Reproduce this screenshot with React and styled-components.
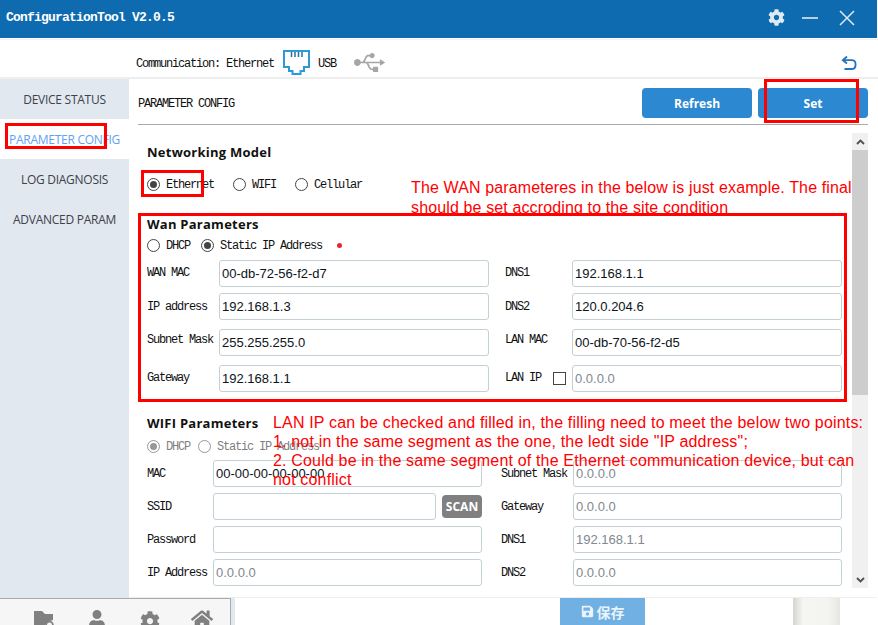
import React from 'react';
import styled, { createGlobalStyle } from 'styled-components';
import { FaCog, FaUsb, FaUser, FaHome, FaSave } from 'react-icons/fa';

const GlobalStyle = createGlobalStyle`
  html, body {
    margin: 0;
    padding: 0;
    background: #fff;
  }
`;

const MONO = '"Liberation Mono", "DejaVu Sans Mono", monospace';
const SANS = '"Liberation Sans", Arial, sans-serif';
const UI = '"Open Sans", "Noto Sans", sans-serif';

const Page = styled.div`
  position: relative;
  width: 878px;
  height: 625px;
  overflow: hidden;
  background: #fff;
  display: flex;
  flex-direction: column;
`;

const TitleBar = styled.div`
  height: 38px;
  margin-right: 1px;
  flex: none;
  background: #0f6bb0;
  display: flex;
  align-items: center;
  padding: 0 22px 0 6px;
  color: #fff;
`;

const AppTitle = styled.div`
  flex: 1;
  font: bold 13px ${MONO};
  letter-spacing: -0.8px;
  margin-top: -3px;
`;

const WindowButton = styled.div`
  display: flex;
  align-items: center;
  justify-content: center;
  margin-left: ${p => p.$gap}px;
  color: #dfeaf3;
  margin-top: -3px;
`;

const Toolbar = styled.div`
  height: 40px;
  flex: none;
  margin-top: 1px;
  box-sizing: border-box;
  border-top: 1px solid #f0f2f4;
  border-bottom: 2px solid #eeeeee;
  display: flex;
  align-items: center;
  padding: 8px 21px 0 136px;
`;

const MonoText = styled.span`
  font: 12px ${MONO};
  letter-spacing: -1.2px;
  padding-top: 2px;
  color: #111;
  white-space: nowrap;
`;

const ToolbarIcon = styled.div`
  display: flex;
  margin: 0 ${p => p.$right ?? 8}px 0 ${p => p.$left ?? 8}px;
`;

const Spacer = styled.div`
  flex: 1;
`;

const Body = styled.div`
  height: 519px;
  flex: none;
  display: flex;
`;

const Sidebar = styled.nav`
  width: 129px;
  flex: none;
  background: #e1e8f0;
  display: flex;
  flex-direction: column;
`;

const SideItem = styled.div`
  height: 40px;
  display: flex;
  align-items: center;
  justify-content: center;
  font: 12px ${UI};
  letter-spacing: -0.27px;
  white-space: nowrap;
  color: ${p => (p.$active ? '#5fa3f2' : '#3d4148')};
  background: ${p => (p.$active ? '#fff' : 'transparent')};
`;

const Main = styled.main`
  flex: 1;
  min-width: 0;
  margin-right: 1px;
  display: flex;
  flex-direction: column;
  border-bottom: 1px solid #eeeeee;
`;

const MainHeader = styled.div`
  height: 46px;
  margin: 0 9px;
  flex: none;
  box-sizing: border-box;
  border-bottom: 1px solid #aaaaaa;
  display: flex;
  align-items: center;
  gap: 6px;
  padding-top: 3px;
`;

const PrimaryButton = styled.button`
  width: 110px;
  height: 30px;
  border: none;
  border-radius: 4px;
  background: #2b88d1;
  color: #fff;
  font: bold 12px ${UI};
  padding: 0;
`;

const Content = styled.div`
  flex: 1;
  min-height: 0;
  display: flex;
  padding: 8px 9px 0 18px;
`;

const Form = styled.div`
  flex: 1;
  min-width: 0;
  overflow: hidden;
`;

const SectionTitle = styled.h3`
  margin: ${p => p.$top}px 0 0;
  height: 18px;
  font: bold 13px/18px ${UI};
  letter-spacing: 0.25px;
  color: #111;
`;

const RadioRow = styled.div`
  display: flex;
  align-items: center;
  height: 16px;
  margin-top: ${p => p.$top}px;
`;

const RadioItem = styled.label`
  display: flex;
  align-items: center;
  margin-right: ${p => p.$gap}px;
  gap: 6px;
  opacity: ${p => (p.$off ? 0.55 : 1)};
`;

const RadioCircle = styled.span`
  box-sizing: border-box;
  width: 13px;
  height: 13px;
  border-radius: 50%;
  border: 1px solid #444;
  background: #fff;
  display: flex;
  align-items: center;
  justify-content: center;
  &::after {
    content: '';
    display: ${p => (p.$on ? 'block' : 'none')};
    width: 7px;
    height: 7px;
    border-radius: 50%;
    background: #444;
  }
`;

const RedDot = styled.span`
  width: 5px;
  height: 5px;
  border-radius: 50%;
  background: #e8262d;
  margin-left: -1px;
`;

const FieldGrid = styled.div`
  display: grid;
  grid-template-columns: ${p => p.$columns};
  align-items: center;
  margin-top: ${p => p.$top}px;
`;

const FieldRow = styled.div`
  display: contents;
`;

// the labels do not sit on the input's centre line: raise says how far the
// cell is shortened from below
const Label = styled.div`
  font: 12px ${MONO};
  letter-spacing: -1.2px;
  color: #111;
  white-space: nowrap;
  display: flex;
  align-items: center;
  justify-content: space-between;
  padding-right: 6px;
  margin-bottom: ${p => p.$raise}px;
`;

const RightLabel = styled(Label)`
  padding-left: ${p => p.$indent}px;
`;

const Input = styled.div`
  box-sizing: border-box;
  height: 27px;
  margin-bottom: ${p => p.$below}px;
  border: 1px solid #c3d0d6;
  border-radius: 3px;
  background: #fff;
  display: flex;
  align-items: center;
  padding-left: 2px;
  font: 13px ${SANS};
  color: ${p => (p.$muted ? '#808890' : '#0c1420')};
  white-space: nowrap;
  overflow: hidden;
`;

const SsidCell = styled.div`
  display: flex;
  gap: 6px;
  margin-bottom: 6px;
`;

const SsidInput = styled(Input)`
  flex: 1;
  margin-bottom: 0;
`;

const ScanButton = styled.div`
  width: 40px;
  height: 23px;
  margin-top: 2px;
  border-radius: 4px;
  background: #808080;
  color: #fff;
  font: bold 12px/23px ${UI};
  text-align: center;
`;

const Checkbox = styled.span`
  box-sizing: border-box;
  width: 13px;
  height: 13px;
  border: 1px solid #444;
  background: #fff;
`;

const Scrollbar = styled.div`
  width: 16px;
  height: 455px;
  flex: none;
  background: #f0f0f0;
  display: flex;
  flex-direction: column;
  align-items: center;
`;

const ScrollArrow = styled.div`
  height: 17px;
  flex: none;
  display: flex;
  align-items: center;
  justify-content: center;
`;

const ScrollThumb = styled.div`
  width: 100%;
  height: 245px;
  flex: none;
  background: #cdcdcd;
`;

const Footer = styled.div`
  height: 27px;
  flex: none;
  display: flex;
  overflow: hidden;
`;

const Dock = styled.div`
  width: 231px;
  flex: none;
  box-sizing: border-box;
  background: #f6f6f6;
  border-top: 1px solid #aaaaaa;
  border-right: 1px solid #aaaaaa;
  display: flex;
  padding-left: 34px;
  color: #808080;
`;

const DockIcon = styled.div`
  display: flex;
  margin: ${p => p.$top}px 0 0 ${p => p.$left}px;
`;

const DockEdge = styled.div`
  width: 4px;
  flex: none;
  background: #e1e8f0;
`;

const SaveButton = styled.div`
  width: 85px;
  height: 27px;
  margin-left: 325px;
  flex: none;
  background: #70b0e2;
  color: #e9f3fb;
  display: flex;
  align-items: center;
  justify-content: center;
  gap: 3px;
  font: bold 14px "Noto Sans CJK SC", sans-serif;
`;

const BackdropEdge = styled.div`
  width: 47px;
  margin-left: 148px;
  flex: none;
  background: linear-gradient(90deg, #d4d4d0 0, #f6f6f3 22%, #f4f4f1 75%, #e6e6e3 100%);
`;

// red markup drawn over the screenshot
const MarkBox = styled.div`
  position: absolute;
  left: ${p => p.$x}px;
  top: ${p => p.$y}px;
  width: ${p => p.$w}px;
  height: ${p => p.$h}px;
  box-sizing: border-box;
  border: 3px solid #ff0000;
`;

const Note = styled.div`
  position: absolute;
  left: ${p => p.$x}px;
  top: ${p => p.$y}px;
  font: 16px/${p => p.$line}px ${SANS};
  letter-spacing: ${p => p.$track}px;
  color: #ff0000;
  white-space: nowrap;
`;

const Rj45Icon = () => (
  <svg width="27" height="25" viewBox="0 0 27 25" fill="none" stroke="#2c9ad8" strokeWidth="2">
    <path d="M1 1H26V17H21V21H17.5V24H9.5V21H6V17H1Z" />
    <path d="M8.5 2V7M12 2V7M15.5 2V7M19 2V7" strokeWidth="1.5" stroke="#27709f" />
  </svg>
);

const UndoIcon = () => (
  <svg width="16" height="16" viewBox="0 0 16 16" fill="none" stroke="#2272c3" strokeWidth="1.8">
    <path d="M6 1.5L1.8 5.2L6 8.5" />
    <path d="M2 5.2H10.5C13 5.2 14.6 7 14.6 9.4C14.6 12 13 14 10.5 14H3.5" />
  </svg>
);

const MinimizeIcon = () => (
  <svg width="16" height="16" viewBox="0 0 16 16" stroke="currentColor" strokeWidth="1.6">
    <path d="M0 8H16" />
  </svg>
);

const CloseIcon = () => (
  <svg width="16" height="16" viewBox="0 0 16 16" stroke="currentColor" strokeWidth="1.5">
    <path d="M1 1L15 15M15 1L1 15" />
  </svg>
);

const Chevron = ({ up }) => (
  <svg width="9" height="6" viewBox="0 0 9 6" fill="none" stroke="#505050" strokeWidth="1.8">
    <path d={up ? 'M1 5L4.5 1.5L8 5' : 'M1 1L4.5 4.5L8 1'} />
  </svg>
);

const FolderGearIcon = () => (
  <svg width="20" height="20" viewBox="0 0 20 20">
    <path d="M0 0H8L11 3H19V9L13 11L10 16V20H0Z" fill="currentColor" />
    <circle cx="15.5" cy="14" r="3.4" fill="none" stroke="currentColor" strokeWidth="1.8" />
  </svg>
);

const wanRows = [
  { label: 'WAN MAC', value: '00-db-72-56-f2-d7', side: 'DNS1', sideValue: '192.168.1.1', below: 6, raise: 7 },
  { label: 'IP address', value: '192.168.1.3', side: 'DNS2', sideValue: '120.0.204.6', below: 9, raise: 8 },
  { label: 'Subnet Mask', value: '255.255.255.0', side: 'LAN MAC', sideValue: '00-db-70-56-f2-d5', below: 9, raise: 14 },
];

const App = () => (
  <Page>
    <GlobalStyle />
    <TitleBar>
      <AppTitle>ConfigurationTool V2.0.5</AppTitle>
      <WindowButton><FaCog size={17} /></WindowButton>
      <WindowButton $gap={17}><MinimizeIcon /></WindowButton>
      <WindowButton $gap={21}><CloseIcon /></WindowButton>
    </TitleBar>

    <Toolbar>
      <MonoText>Communication: Ethernet</MonoText>
      <ToolbarIcon $left={9} $right={8}><Rj45Icon /></ToolbarIcon>
      <MonoText>USB</MonoText>
      <ToolbarIcon $left={18}><FaUsb size={31} color="#a6a6a6" /></ToolbarIcon>
      <Spacer />
      <UndoIcon />
    </Toolbar>

    <Body>
      <Sidebar>
        <SideItem>DEVICE STATUS</SideItem>
        <SideItem $active>PARAMETER CONFIG</SideItem>
        <SideItem>LOG DIAGNOSIS</SideItem>
        <SideItem>ADVANCED PARAM</SideItem>
      </Sidebar>

      <Main>
        <MainHeader>
          <MonoText>PARAMETER CONFIG</MonoText>
          <Spacer />
          <PrimaryButton>Refresh</PrimaryButton>
          <PrimaryButton>Set</PrimaryButton>
        </MainHeader>

        <Content>
          <Form>
            <SectionTitle $top={10}>Networking Model</SectionTitle>
            <RadioRow $top={15}>
              <RadioItem $gap={19}><RadioCircle $on /><MonoText>Ethernet</MonoText></RadioItem>
              <RadioItem $gap={19}><RadioCircle /><MonoText>WIFI</MonoText></RadioItem>
              <RadioItem><RadioCircle /><MonoText>Cellular</MonoText></RadioItem>
            </RadioRow>

            <SectionTitle $top={23}>Wan Parameters</SectionTitle>
            <RadioRow $top={4}>
              <RadioItem $gap={11}><RadioCircle /><MonoText>DHCP</MonoText></RadioItem>
              <RadioItem $gap={16}><RadioCircle $on /><MonoText>Static IP Address</MonoText></RadioItem>
              <RedDot />
            </RadioRow>
            <FieldGrid $columns="72px 270px 83px 270px" $top={7}>
              {wanRows.map(row => (
                <FieldRow key={row.label}>
                  <Label $raise={row.raise}>{row.label}</Label>
                  <Input $below={row.below}>{row.value}</Input>
                  <RightLabel $indent={16} $raise={row.raise}>{row.side}</RightLabel>
                  <Input $below={row.below}>{row.sideValue}</Input>
                </FieldRow>
              ))}
              <FieldRow>
                <Label $raise={1}>Gateway</Label>
                <Input $below={0}>192.168.1.1</Input>
                <RightLabel $indent={16} $raise={1}>LAN IP<Checkbox /></RightLabel>
                <Input $below={0} $muted>0.0.0.0</Input>
              </FieldRow>
            </FieldGrid>

            <SectionTitle $top={22}>WIFI Parameters</SectionTitle>
            <RadioRow $top={6}>
              <RadioItem $gap={8} $off><RadioCircle $on /><MonoText>DHCP</MonoText></RadioItem>
              <RadioItem $off><RadioCircle /><MonoText>Static IP Address</MonoText></RadioItem>
            </RadioRow>
            <FieldGrid $columns="66px 269px 91px 269px" $top={6}>
              <FieldRow>
                <Label $raise={5}>MAC</Label>
                <Input $below={6}>00-00-00-00-00-00</Input>
                <RightLabel $indent={19} $raise={5}>Subnet Mask</RightLabel>
                <Input $below={6} $muted>0.0.0.0</Input>
              </FieldRow>
              <FieldRow>
                <Label $raise={5}>SSID</Label>
                <SsidCell>
                  <SsidInput $below={0} />
                  <ScanButton>SCAN</ScanButton>
                </SsidCell>
                <RightLabel $indent={19} $raise={5}>Gateway</RightLabel>
                <Input $below={6} $muted>0.0.0.0</Input>
              </FieldRow>
              <FieldRow>
                <Label $raise={5}>Password</Label>
                <Input $below={6} />
                <RightLabel $indent={19} $raise={5}>DNS1</RightLabel>
                <Input $below={6} $muted>192.168.1.1</Input>
              </FieldRow>
              <FieldRow>
                <Label $raise={0}>IP Address</Label>
                <Input $below={0} $muted>0.0.0.0</Input>
                <RightLabel $indent={19} $raise={0}>DNS2</RightLabel>
                <Input $below={0} $muted>0.0.0.0</Input>
              </FieldRow>
            </FieldGrid>
          </Form>

          <Scrollbar>
            <ScrollArrow><Chevron up /></ScrollArrow>
            <ScrollThumb />
            <Spacer />
            <ScrollArrow><Chevron /></ScrollArrow>
          </Scrollbar>
        </Content>
      </Main>
    </Body>

    <Footer>
      <Dock>
        <DockIcon $left={0} $top={12}><FolderGearIcon /></DockIcon>
        <DockIcon $left={34} $top={11}><FaUser size={18} /></DockIcon>
        <DockIcon $left={34} $top={12}><FaCog size={20} /></DockIcon>
        <DockIcon $left={31} $top={9}><FaHome size={22} /></DockIcon>
      </Dock>
      <DockEdge />
      <SaveButton><FaSave size={13} />保存</SaveButton>
      <BackdropEdge />
    </Footer>

    <MarkBox $x={764} $y={79} $w={95} $h={44} />
    <MarkBox $x={5} $y={123} $w={102} $h={26} />
    <MarkBox $x={141} $y={170} $w={63} $h={27} />
    <MarkBox $x={138} $y={213} $w={709} $h={189} />

    <Note $x={411} $y={178} $line={20} $track={0.13}>
      The WAN parameteres in the below is just example. The final<br />
      should be set accroding to the site condition
    </Note>
    <Note $x={273} $y={413} $line={19} $track={0.17}>
      LAN IP can be checked and filled in, the filling need to meet the below two points:<br />
      1. not in the same segment as the one, the ledt side "IP address";<br />
      2. Could be in the same segment of the Ethernet communication device, but can<br />
      not conflict
    </Note>
  </Page>
);

export default App;
